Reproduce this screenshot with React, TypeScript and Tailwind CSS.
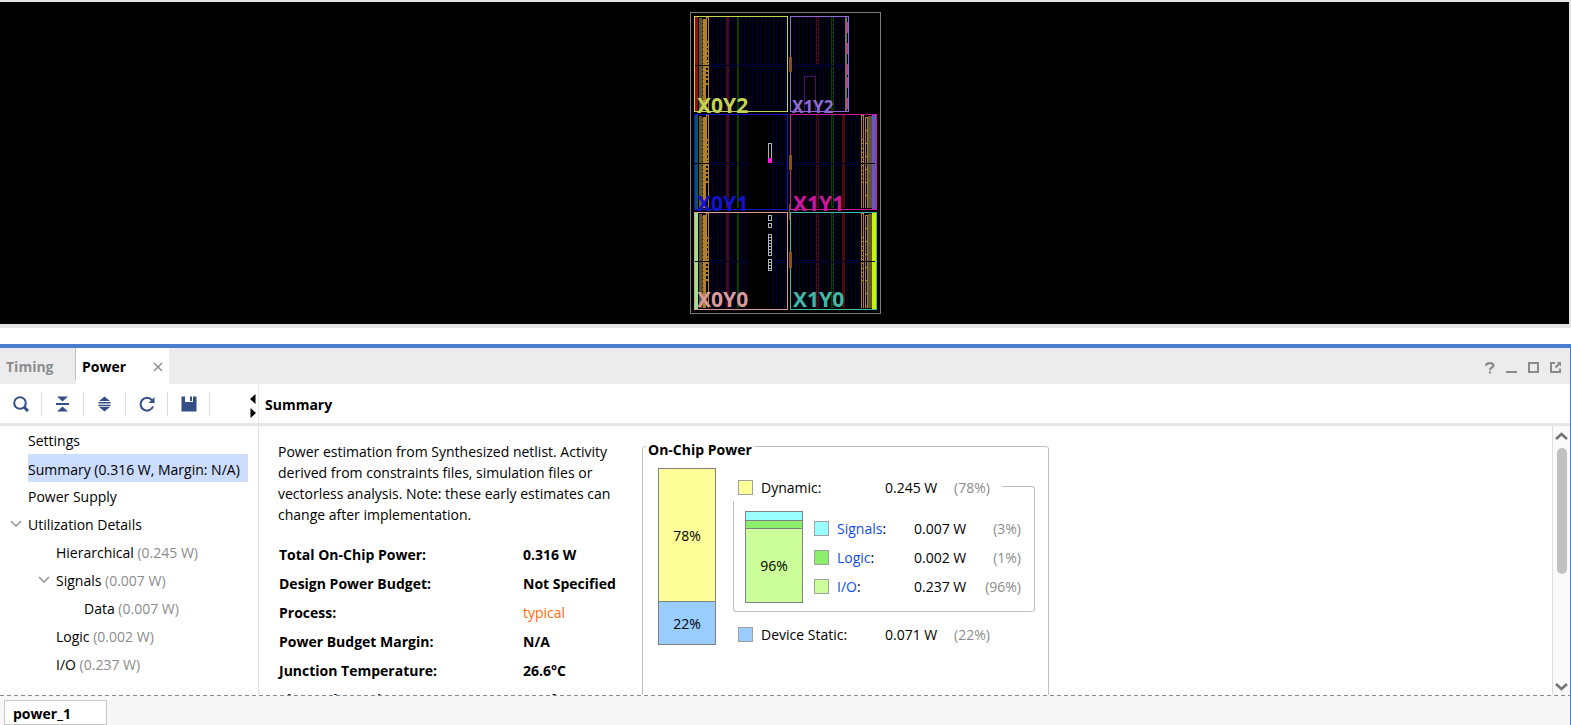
import React from "react";

const BLUE = "#00003c";
const ORANGE = "#b07f2c";

const regions = [
  { name: "X0Y2", x: 694, y: 16, w: 93, h: 95, color: "#c3d453", size: 21 },
  { name: "X1Y2", x: 790, y: 16, w: 58, h: 95, color: "#8f6ad6", size: 17 },
  { name: "X0Y1", x: 694, y: 114, w: 93, h: 95, color: "#1212cc", size: 21 },
  { name: "X1Y1", x: 790, y: 114, w: 86, h: 95, color: "#d0149c", size: 21 },
  { name: "X0Y0", x: 694, y: 212, w: 93, h: 97, color: "#d99a9a", size: 21 },
  { name: "X1Y0", x: 790, y: 212, w: 86, h: 97, color: "#42b8a4", size: 21 },
];

const range = (from: number, to: number, step: number) =>
  Array.from({ length: Math.max(0, Math.ceil((to - from) / step)) }, (_, i) => from + i * step);

function Ladder({ x, y, h, left = false }: { x: number; y: number; h: number; left?: boolean }) {
  return (
    <g fill={ORANGE}>
      <rect x={x} y={y} width={1} height={h} />
      <rect x={x + 2} y={y} width={1} height={h} />
      {(left ? [0, 24, 29, 33, 38, 43, 46] : range(0, h, 13)).map((d) => (
        <rect key={d} x={x} y={y + d} width={3} height={left && d ? 2 : 1} />
      ))}
    </g>
  );
}

function LeftColumn({ y, h, edge, gap }: { y: number; h: number; edge: string; gap: boolean }) {
  const mid = y + 49;
  const xs = range(713, 786, 4).filter((x) => !gap || x < 748 || x > 771);
  const spans = gap ? [[703, 45], [772, 15]] : [[703, 84]];
  return (
    <g>
      {xs.map((x) => (
        <rect key={x} x={x} y={y + 1} width={1} height={h - 2} fill={BLUE} />
      ))}
      {spans.map(([x, w]) => (
        <g key={x} fill={BLUE}>
          <rect x={x} y={mid - 1} width={w} height={1} />
          <rect x={x} y={mid + 1} width={w} height={1} />
        </g>
      ))}
      <rect x={695} y={y + 1} width={3} height={h - 1} fill={edge} />
      <rect x={699} y={y + 2} width={3} height={h - 3} fill="#5f5530" />
      {range(y + 4, y + h - 2, 4).map((d) => (
        <rect key={d} x={702} y={d} width={1} height={3} fill="#5f5530" />
      ))}
      <rect x={703} y={y + 3} width={3} height={h - 4} fill={ORANGE} />
      <Ladder x={706} y={y + 1} h={47} left />
      <rect x={708} y={y + 50} width={1} height={h - 51} fill={ORANGE} />
      {[1, 5, 9, 13, 18].map((d) => (
        <rect key={d} x={706} y={mid + d} width={3} height={2} fill={ORANGE} />
      ))}
      <rect x={726} y={y + 1} width={3} height={h - 2} fill="#4a0a12" />
      <rect x={737} y={y + 1} width={2} height={h - 2} fill="#044008" />
      <rect x={695} y={mid} width={92} height={1} fill="#000000" />
    </g>
  );
}

function RightColumn({ y, h, edge }: { y: number; h: number; edge?: string }) {
  const mid = y + 49;
  const end = edge ? 860 : 844;
  return (
    <g>
      {range(795, end, 4).map((x) => (
        <rect key={x} x={x} y={y + 1} width={1} height={h - 2} fill={BLUE} />
      ))}
      <rect x={792} y={mid - 1} width={end - 792} height={1} fill={BLUE} />
      <rect x={792} y={mid + 1} width={end - 792} height={1} fill={BLUE} />
      <g fill="none" strokeWidth={1}>
        <rect x={816.5} y={y + 1.5} width={2} height={edge ? h - 3 : 46} stroke="#4a0a12" />
        <path d={`M817.5 ${y + 4}V${edge ? y + h - 2 : mid}`} stroke="#4a0a12" strokeDasharray="1 3" />
        <rect x={831.5} y={y + 1.5} width={2} height={h - 3} stroke="#044008" />
        <path d={`M832.5 ${y + 4}V${y + h - 2}`} stroke="#044008" strokeDasharray="1 3" />
      </g>
      {edge ? (
        <g>
          <rect x={842} y={y + 1} width={3} height={h - 2} fill="#4a0a12" />
          <rect x={861} y={y + 1} width={1} height={h - 2} fill={ORANGE} />
          <rect x={863} y={y + 1} width={1} height={h - 2} fill={ORANGE} />
          {[0, 24, 28, 33, 37, 42, 46, 50, 55, 59, 63, 67].map((d) => (
            <rect key={d} x={861} y={y + 1 + d} width={3} height={1} fill={ORANGE} />
          ))}
          <Ladder x={865} y={y + 3} h={h - 4} />
          <rect x={868} y={y + 2} width={4} height={h - 3} fill="#5f5530" />
          <rect x={872} y={y + 1} width={4} height={h - 1} fill={edge} />
        </g>
      ) : (
        <g>
          <rect x={845} y={y + 1} width={2} height={h - 1} fill="#707070" />
          {[6, 27, 48, 61, 82].map((d) => (
            <rect key={d} x={847} y={y + d} width={1} height={11} fill="#ff1690" />
          ))}
          <rect x={804.5} y={76.5} width={11} height={35} fill="#000000" stroke="#48106a" />
        </g>
      )}
      <rect x={791} y={mid} width={end + (edge ? 15 : 1) - 791} height={1} fill="#000000" />
    </g>
  );
}

function Device() {
  return (
    <svg width="192" height="303" viewBox="689 12 192 303" shapeRendering="crispEdges" role="img" aria-label="Device floorplan">
      <rect x={690.5} y={12.5} width={190} height={301} fill="none" stroke="#7c7c7c" />
      <LeftColumn y={16} h={95} edge="#8c1010" gap={false} />
      <LeftColumn y={114} h={95} edge="#10505f" gap />
      <LeftColumn y={212} h={97} edge="#98e58c" gap />
      <RightColumn y={16} h={95} />
      <RightColumn y={114} h={95} edge="#6c54b8" />
      <RightColumn y={212} h={97} edge="#c8f20c" />
      {regions.map((r) => (
        <rect key={r.name} x={r.x + 0.5} y={r.y + 0.5} width={r.w} height={r.h} fill="none" stroke={r.color} />
      ))}
      <g fill="#8a4f18">
        <rect x={789} y={57} width={3} height={15} />
        <rect x={789} y={155} width={3} height={15} />
        <rect x={789} y={204} width={1} height={16} />
        <rect x={789} y={252} width={3} height={16} />
      </g>
      <rect x={768.5} y={143.5} width={3} height={15} fill="#000000" stroke="#b4b4b4" />
      <rect x={768} y={158} width={4} height={5} fill="#ff18d0" />
      <g fill="#000000" stroke="#b4b4b4">
        <rect x={768.5} y={215.5} width={3} height={5} />
        <rect x={768.5} y={223.5} width={3} height={4} />
        {[234, 237, 240, 243, 246, 249, 252, 259, 262, 265, 268].map((y) => (
          <rect key={y} x={768.5} y={y + 0.5} width={3} height={y === 268 ? 2 : 3} />
        ))}
      </g>
      {regions.map((r) => (
        <text
          key={r.name}
          x={r.x + (r.size === 21 ? 3 : 2)}
          y={r.y + r.h + (r.h === 97 ? -2 : 2)}
          fontSize={r.size}
          fill={r.color}
          className="font-['Noto_Sans'] font-bold"
        >
          {r.name}
        </text>
      ))}
    </svg>
  );
}

function ToolButton({ label, children }: { label: string; children: React.ReactNode }) {
  return (
    <button type="button" aria-label={label} className="flex h-6 w-[42px] items-center justify-center border-r border-[#dcdcdc] text-[#344e86]">
      <svg width="16" height="16" viewBox="0 0 16 16" fill="currentColor">
        {children}
      </svg>
    </button>
  );
}

function Toolbar() {
  return (
    <div className="flex h-full items-center">
      <ToolButton label="Search">
        <circle cx="7" cy="7" r="5.8" fill="none" stroke="currentColor" strokeWidth="2" />
        <path d="M11 11l4 4" stroke="currentColor" strokeWidth="3" />
      </ToolButton>
      <ToolButton label="Collapse all">
        <path d="M2 0.5h11L7.5 5.5zM2 15.5h11l-5.500-5zM1 7h13v2H1z" />
      </ToolButton>
      <ToolButton label="Expand all">
        <path d="M7.500 0.500l5.500 4.500H2zM7.500 15.500l5.500-4.500H2zM1.500 6h12v1.500h-12zM1.500 8.700h12v1.500h-12z" />
      </ToolButton>
      <ToolButton label="Refresh">
        <path d="M13 4.200A6.400 6.400 0 1 0 14 10.500" fill="none" stroke="currentColor" strokeWidth="2" />
        <path d="M15.500 1v6H9.500z" />
      </ToolButton>
      <ToolButton label="Save">
        <path d="M0.500 0.500H4V6h8V0.500h3.500v15H0.500zM9 0.500h2V5H9z" />
      </ToolButton>
    </div>
  );
}

function Chevron() {
  return (
    <svg width="12" height="8" viewBox="0 0 12 8" fill="none" stroke="#9a9a9a" strokeWidth="1.6">
      <path d="M1 1l5 5 5-5" />
    </svg>
  );
}

function TreeItem({ label, value, indent, open }: { label: string; value?: string; indent: string; open?: boolean }) {
  return (
    <li className={`flex h-7 items-center ${indent}`}>
      <span className="flex w-[18px] shrink-0">{open && <Chevron />}</span>
      <button type="button" className="whitespace-nowrap">
        {label} {value && <span className="text-[#8c8c8c]">({value})</span>}
      </button>
    </li>
  );
}

const details: [string, string, string?][] = [
  ["Total On-Chip Power:", "0.316 W"],
  ["Design Power Budget:", "Not Specified"],
  ["Process:", "typical", "font-normal text-[#ff6a0c]"],
  ["Power Budget Margin:", "N/A"],
  ["Junction Temperature:", "26.6°C"],
  ["Thermal Margin:", "58.4°C (11.6 W)"],
];

const parts = [
  { name: "Signals", value: "0.007 W", share: "(3%)", swatch: "bg-[#99ffff]" },
  { name: "Logic", value: "0.002 W", share: "(1%)", swatch: "bg-[#8bee6c]" },
  { name: "I/O", value: "0.237 W", share: "(96%)", swatch: "bg-[#ccff99]" },
];

function Swatch({ color }: { color: string }) {
  return <span className={`size-[15px] shrink-0 border border-[#a0a0a0] ${color}`} />;
}

function TotalRow({ label, value, share, color }: { label: string; value: string; share: string; color: string }) {
  return (
    <div className="flex h-7 items-center bg-white">
      <Swatch color={color} />
      <span className="w-[132px] pl-2">{label}</span>
      <span className="w-[69px]">{value}</span>
      <span className="pr-3 text-[#8c8c8c]">{share}</span>
    </div>
  );
}

function OnChipPower() {
  return (
    <fieldset className="mt-[6px] h-[420px] w-[407px] shrink-0 rounded-[3px] border border-[#c0c0c0] pl-[15px]">
      <legend className="-ml-3 px-[2px] pt-2 leading-5 font-bold">On-Chip Power</legend>
      <div className="flex pt-2">
        <div className="flex h-[177px] w-[58px] flex-col border border-[#808080] text-center">
          <div className="flex flex-1 items-center justify-center border-b border-[#808080] bg-[#ffff99]">78%</div>
          <div className="flex h-[42px] items-center justify-center bg-[#99ccff]">22%</div>
        </div>
        <div className="ml-[17px] w-[302px] pt-[5px]">
          <div className="flex items-center pl-[5px]">
            <TotalRow label="Dynamic:" value="0.245 W" share="(78%)" color="bg-[#ffff99]" />
            <div className="h-7 flex-1 pt-[13px]">
              <div className="h-[15px] rounded-tr-[3px] border-t border-r border-[#c0c0c0]" />
            </div>
          </div>
          <div className="border-r border-[#c0c0c0] rounded-br-[3px]">
            <div className="flex h-[111px] rounded-b-[3px] border-b border-l border-[#c0c0c0] pt-[10px] pl-[11px]">
              <div className="flex h-[92px] w-[58px] flex-col border border-[#808080]">
                <div className="h-[9px] border-b border-[#808080] bg-[#99ffff]" />
                <div className="h-2 border-b border-[#808080] bg-[#8bee6c]" />
                <div className="flex flex-1 items-center justify-center bg-[#ccff99]">96%</div>
              </div>
              <ul className="ml-[11px] pt-[3px]">
                {parts.map((p) => (
                  <li key={p.name} className="flex h-[29px] items-center">
                    <Swatch color={p.swatch} />
                    <span className="w-[85px] pl-2">
                      <a href="#" className="text-[#0f50f0]">{p.name}</a>:
                    </span>
                    <span className="w-[60px]">{p.value}</span>
                    <span className="w-[47px] text-right text-[#8c8c8c]">{p.share}</span>
                  </li>
                ))}
              </ul>
            </div>
          </div>
          <div className="pt-2 pl-[5px]">
            <TotalRow label="Device Static:" value="0.071 W" share="(22%)" color="bg-[#99ccff]" />
          </div>
        </div>
      </div>
    </fieldset>
  );
}

export default function App() {
  return (
    <div className="flex h-screen flex-col overflow-hidden bg-white font-['Open_Sans','Noto_Sans',sans-serif] text-[14px] text-black">
      <div className="border-t-2 border-r-2 border-b-4 border-[#e4e4e4]">
        <div className="flex h-[322px] justify-center bg-black pt-[10px]">
          <Device />
        </div>
      </div>
      <main className="mt-4 flex min-h-0 flex-1 flex-col border-t-4 border-r border-[#4a7dcf]">
        <div className="flex h-9 shrink-0 bg-[#ececec] font-bold">
          <button type="button" className="mb-1 w-[76px] border-r border-[#c0c0c0] pt-1 pl-[6px] text-left text-[#8c8c8c]">Timing</button>
          <div className="flex w-[93px] items-center justify-between bg-white pt-px pr-[6px] pl-[6px]">
            <button type="button">Power</button>
            <button type="button" aria-label="Close">
              <svg width="10" height="10" viewBox="0 0 10 10" stroke="#8a8a8a" strokeWidth="1.4">
                <path d="M1 1l8 8M9 1l-8 8" />
              </svg>
            </button>
          </div>
          <div className="ml-auto flex items-center gap-[10px] pt-1 pr-2 text-[#8a8a8a]">
            <button type="button" aria-label="Help">
              <svg width="12" height="12" viewBox="0 0 12 12" fill="none" stroke="#8a8a8a" strokeWidth="2.200">
                <path d="M2 3.800C2.200 0.300 9.500 0.300 9.500 3.600C9.500 5.500 6 5.500 6 8.200M6 9.500v2" />
              </svg>
            </button>
            <button type="button" aria-label="Minimize">
              <svg width="12" height="12" viewBox="0 0 12 12"><path d="M0 9h11v2H0z" fill="#8a8a8a" /></svg>
            </button>
            <button type="button" aria-label="Maximize">
              <svg width="12" height="12" viewBox="0 0 12 12" fill="none" stroke="#8a8a8a" strokeWidth="2"><path d="M1 1h9v9H1z" /></svg>
            </button>
            <button type="button" aria-label="Float">
              <svg width="12" height="12" viewBox="0 0 12 12" fill="none" stroke="#8a8a8a" strokeWidth="2">
                <path d="M5 1H1v9h9V6.500M5.500 5.500l3.500-3.500" />
                <path d="M6.500 0H11v4.500z" fill="#8a8a8a" stroke="none" />
              </svg>
            </button>
          </div>
        </div>
        <div className="flex h-[42px] shrink-0 border-b-3 border-[#e6e6e6]">
          <div className="flex w-[259px] shrink-0 justify-between border-r border-[#e6e6e6]">
            <Toolbar />
            <button type="button" aria-label="Toggle sidebar" className="pt-1 pr-[2px]">
              <svg width="6" height="24" viewBox="0 0 6 24"><path d="M5.500 0v10L0 5zM0.500 14v10l5.500-5z" /></svg>
            </button>
          </div>
          <h2 className="self-center pt-[2px] pl-[6px] font-bold">Summary</h2>
        </div>
        <div className="flex min-h-0 flex-1">
          <ul className="w-[259px] shrink-0 overflow-hidden border-r border-[#e0e0e0]">
            <TreeItem label="Settings" indent="pl-[10px]" />
            <li className="flex h-7 items-center pl-7">
              <button type="button" className="h-7 w-[220px] bg-[#cbdcfd] pt-[2px] text-left whitespace-nowrap">Summary (0.316 W, Margin: N/A)</button>
            </li>
            <TreeItem label="Power Supply" indent="pl-[10px]" />
            <TreeItem label="Utilization Details" indent="pl-[10px]" open />
            <TreeItem label="Hierarchical" value="0.245 W" indent="pl-[38px]" />
            <TreeItem label="Signals" value="0.007 W" indent="pl-[38px]" open />
            <TreeItem label="Data" value="0.007 W" indent="pl-[66px]" />
            <TreeItem label="Logic" value="0.002 W" indent="pl-[38px]" />
            <TreeItem label="I/O" value="0.237 W" indent="pl-[38px]" />
          </ul>
          <section className="flex min-w-0 flex-1 overflow-hidden pl-[19px]">
            <div className="w-[364px] shrink-0 pt-[15px]">
              <p className="leading-[21px]">
                Power estimation from Synthesized netlist. Activity
                <br />
                derived from constraints files, simulation files or
                <br />
                vectorless analysis. Note: these early estimates can
                <br />
                change after implementation.
              </p>
              <dl className="grid grid-cols-[244px_auto] pt-[15px] pl-px leading-[29px] font-bold">
                {details.map(([k, v, style]) => (
                  <React.Fragment key={k}>
                    <dt>{k}</dt>
                    <dd className={style}>{v}</dd>
                  </React.Fragment>
                ))}
              </dl>
            </div>
            <OnChipPower />
          </section>
          <div className="flex w-[18px] shrink-0 flex-col items-center border-l border-[#e0e0e0] bg-[#fafafa] pt-1 pb-[2px]">
            <svg width="13" height="12" viewBox="0 0 13 12" fill="none" stroke="#757575" strokeWidth="2.600"><path d="M1 9l5.500-5 5.500 5" /></svg>
            <div className="mt-[6px] h-[126px] w-[10px] rounded-full bg-[#c1c1c1]" />
            <svg className="mt-auto" width="13" height="12" viewBox="0 0 13 12" fill="none" stroke="#757575" strokeWidth="2.600"><path d="M1 3l5.500 5 5.500-5" /></svg>
          </div>
        </div>
        <div className="h-px shrink-0 bg-[repeating-linear-gradient(90deg,#8a8a8a_0_4px,#ffffff_4px_7px)]" />
        <div className="flex h-[29px] shrink-0 bg-[#f7f7f7] pt-1 pl-1">
          <button type="button" className="h-[25px] w-[103px] border border-[#c8c8c8] bg-white pt-[2px] pl-2 text-left font-bold">power_1</button>
        </div>
      </main>
    </div>
  );
}
